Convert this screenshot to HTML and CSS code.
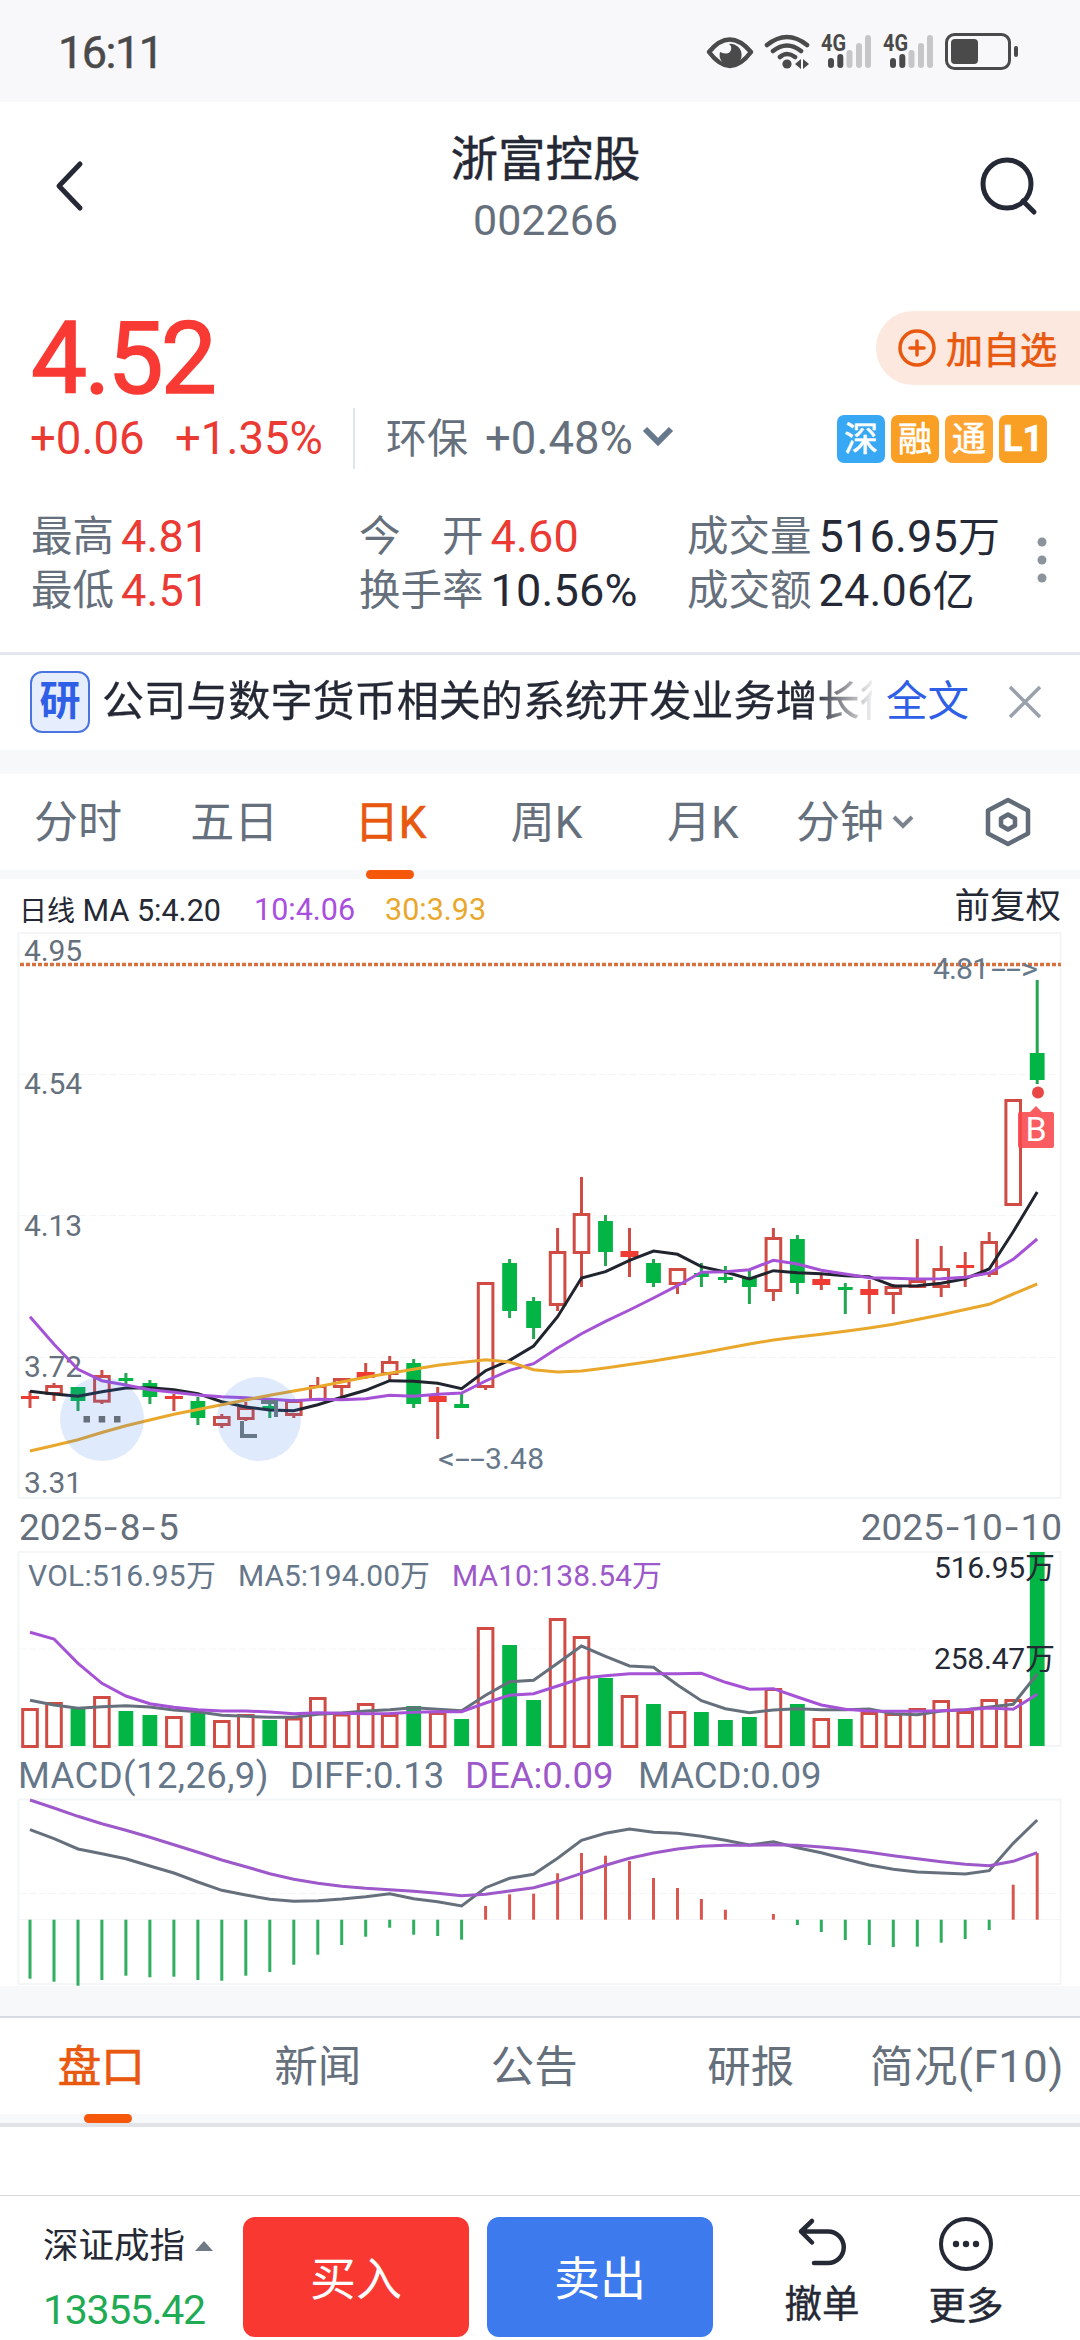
FILE: index.html
```html
<!DOCTYPE html>
<html lang="zh-CN">
<head>
<meta charset="utf-8">
<title>浙富控股 002266</title>
<link rel="stylesheet" href="styles.css">
</head>
<body>
<div class="status">
  <span class="clock">16:11</span>
  <svg class="status-icons" viewBox="700 26 330 50" width="330" height="50">
    <path d="M709 51q20.500-25 42 0q-21 28-42 0Z" fill="none" stroke="#4a4a4a" stroke-width="4.500" stroke-linejoin="round"/>
    <path d="M729 43a11 11 0 1 1-9 8q9 4 11-2q1-4-2-6Z" fill="#4a4a4a"/>
    <g fill="none" stroke="#4a4a4a" stroke-width="4.600" stroke-linecap="round">
      <path d="M767 44q20-16 40 0M773 50q14-11 28 0M780 56q7-6 15 0"/>
    </g>
    <circle cx="787" cy="63" r="4.600" fill="#4a4a4a"/>
    <path d="M795 63l6-5v10ZM809 63l-6-5v10Z" fill="#4a4a4a"/>
    <g>
      <text class="net" x="821" y="50" textLength="25" lengthAdjust="spacingAndGlyphs">4G</text>
      <g stroke-width="6" stroke-linecap="round"><path d="M831 60v4M840.300 56v8" stroke="#4a4a4a"/><path d="M849.500 52v12M859 45v19M868 37v27" stroke="#c6c6c8"/></g>
    </g>
    <g transform="translate(62 0)">
      <text class="net" x="821" y="50" textLength="25" lengthAdjust="spacingAndGlyphs">4G</text>
      <g stroke-width="6" stroke-linecap="round"><path d="M831 60v4M840.300 56v8" stroke="#4a4a4a"/><path d="M849.500 52v12M859 45v19M868 37v27" stroke="#c6c6c8"/></g>
    </g>
    <rect x="946.500" y="33.500" width="63" height="34" rx="8" fill="none" stroke="#4a4a4a" stroke-width="3"/>
    <rect x="951" y="38" width="27" height="25" rx="4" fill="#4a4a4a"/>
    <rect x="1014" y="45" width="4" height="11" rx="2" fill="#4a4a4a"/>
  </svg>
</div>

<header class="header">
  <svg class="back" viewBox="0 0 30 52" width="30" height="52"><path d="M26 4L5 26L26 48" fill="none" stroke="#252935" stroke-width="5" stroke-linecap="round" stroke-linejoin="round"/></svg>
  <div class="title"><h1>浙富控股</h1><p>002266</p></div>
  <svg class="search" viewBox="0 0 60 60" width="60" height="60"><circle cx="28" cy="28" r="24" fill="none" stroke="#252935" stroke-width="5"/><path d="M44 45l11 11" stroke="#252935" stroke-width="5" stroke-linecap="round"/></svg>
</header>

<section class="quote">
  <div class="price-row">
    <span class="price">4.52</span>
    <span class="add"><svg viewBox="0 0 40 40" width="40" height="40"><g fill="none" stroke="#e8590f" stroke-width="3.500" stroke-linecap="round"><circle cx="20" cy="20" r="17"/><path d="M13 20h14M20 13v14"/></g></svg>加自选</span>
  </div>
  <div class="change-row">
    <span class="red c1">+0.06</span><span class="red c2">+1.35%</span>
    <i class="divider"></i>
    <span class="sector">环保</span><span class="sector-pct">+0.48%</span>
    <svg class="chev" viewBox="0 0 32 24" width="32" height="24"><path d="M3 4L16 17L29 4" fill="none" stroke="#66788c" stroke-width="6"/></svg>
    <span class="badges"><b class="bl">深</b><b>融</b><b class="lt">通</b><b class="l1">L1</b></span>
  </div>
  <div class="stats">
    <div><label>最高</label><em class="red">4.81</em></div><div><label>今　开</label><em class="red">4.60</em></div><div><label>成交量</label><em>516.95<small>万</small></em></div>
    <div><label>最低</label><em class="red">4.51</em></div><div><label>换手率</label><em>10.56%</em></div><div><label>成交额</label><em>24.06<small>亿</small></em></div>
    <svg class="dots" viewBox="0 0 10 48" width="10" height="48"><g fill="#8b949c"><circle cx="5" cy="6" r="4.500"/><circle cx="5" cy="24" r="4.500"/><circle cx="5" cy="42" r="4.500"/></g></svg>
  </div>
</section>

<section class="notice">
  <span class="tag">研</span>
  <span class="news">公司与数字货币相关的系统开发业务增长很</span>
  <span class="full">全文</span>
  <svg viewBox="0 0 34 34" width="34" height="34"><path d="M2 2L32 32M32 2L2 32" stroke="#99a1ab" stroke-width="3.500"/></svg>
</section>

<nav class="periods">
  <span>分时</span><span>五日</span><span class="on">日K</span><span>周K</span><span>月K</span>
  <span class="minute">分钟<svg viewBox="0 0 22 16" width="22" height="16"><path d="M2 3l9 9l9-9" fill="none" stroke="#7c858e" stroke-width="4"/></svg></span>
  <svg class="gear" viewBox="0 0 46 50" width="46" height="50"><g fill="none" stroke="#626c79" stroke-width="4.500" stroke-linejoin="round"><path d="M23 3L43 13.500V36.500L23 47L3 36.500V13.500Z"/><path d="M23 17.500L30 21.500V28.500L23 32.500L16 28.500V21.500Z"/></g></svg>
</nav>

<section class="chart">
  <div class="legend">
    <span class="l-ma5"><span class="cn">日线</span> MA 5:4.20</span><span class="l-ma10">10:4.06</span><span class="l-ma30">30:3.93</span><span class="adj">前复权</span>
  </div>
  <svg id="kline" viewBox="0 932 1080 568" width="1080" height="568"></svg>
  <div class="dates"><span>2025<i>-</i>8<i>-</i>5</span><span>2025<i>-</i>10<i>-</i>10</span></div>
  <svg id="volume" viewBox="0 1550 1080 200" width="1080" height="200"></svg>
  <div class="macd-legend"><span class="m1">MACD(12,26,9)</span><span class="m2">DIFF:0.13</span><span class="m3">DEA:0.09</span><span class="m4">MACD:0.09</span></div>
  <svg id="macd" viewBox="0 1798 1080 188" width="1080" height="188"></svg>
</section>

<nav class="tabs"><span class="on">盘口</span><span>新闻</span><span>公告</span><span>研报</span><span class="f10">简况(F10)</span></nav>
<div class="blank"></div>

<footer class="bar">
  <div class="index"><p>深证成指<i></i></p><strong>13355.42</strong></div>
  <button class="buy">买入</button>
  <button class="sell">卖出</button>
  <div class="act undo"><svg viewBox="0 0 54 54" width="54" height="54"><path d="M17 4L6 14.500L17 25.500M6 14.500H33a15.700 15.700 0 0 1 0 31.500H19" fill="none" stroke="#252935" stroke-width="4.500" stroke-linecap="round" stroke-linejoin="round"/></svg><span>撤单</span></div>
  <div class="act more"><svg viewBox="0 0 56 56" width="56" height="56"><circle cx="28" cy="27" r="25" fill="none" stroke="#252935" stroke-width="4"/><g fill="#252935"><circle cx="18" cy="27" r="3.200"/><circle cx="28" cy="27" r="3.200"/><circle cx="38" cy="27" r="3.200"/></g></svg><span>更多</span></div>
</footer>
<script src="chart.js"></script>
</body>
</html>
```
FILE: styles.css
```css
* { box-sizing: border-box; }
body { margin: 0; width: 1080px; height: 2340px; overflow: hidden; background: #fff; color: #252935; font-family: Roboto, "Noto Sans CJK SC", sans-serif; display: flex; flex-direction: column; }
h1, p { margin: 0; font-weight: 400; }
i, em { font-style: normal; }
svg { display: block; flex: none; }
span, label { white-space: nowrap; }
.red { color: #ea3a33; }

.status { height: 102px; background: #f8f8fa; display: flex; align-items: center; justify-content: space-between; padding: 2px 50px 0 58px; flex: none; }
.clock { font-size: 45px; color: #4a4a4a; letter-spacing: -1.500px; -webkit-text-stroke: .5px; }
.net { font: 700 23px Roboto, sans-serif; fill: #4a4a4a; }

.header { height: 198px; flex: none; display: flex; justify-content: space-between; align-items: flex-start; padding: 0 41px 0 54px; }
.back { margin-top: 58px; }
.search { margin-top: 54px; }
.title { text-align: center; padding-top: 30px; margin-left: 28px; }
.title h1 { font-size: 47.500px; line-height: 56px; font-weight: 400; -webkit-text-stroke: .4px; }
.title p { font-size: 43px; line-height: 60px; margin-top: 2px; color: #66707d; }

.quote { height: 352px; flex: none; }
.price-row { height: 104px; display: flex; justify-content: space-between; align-items: flex-start; padding: 0 0 0 31px; }
.price { font-size: 100px; line-height: 117px; color: #f93a34; letter-spacing: -3px; -webkit-text-stroke: 1.500px; }
.add { margin-top: 11px; width: 204px; height: 74px; border-radius: 37px 0 0 37px; background: #fde8e0; color: #e8590f; display: flex; align-items: center; padding: 0 0 0 21px; gap: 9px; font-size: 37px; -webkit-text-stroke: .7px; }
.change-row { height: 69px; display: flex; align-items: center; font-size: 45.500px; padding-left: 30px; color: #66707d; line-height: 60px; }
.c1 { width: 145px; }
.c2 { width: 178px; }
.divider { width: 2px; height: 61px; background: #dfe5ea; margin-right: 31px; }
.sector { font-size: 41px; width: 99px; }
.sector-pct { width: 157px; }
.chev { margin-top: -4px; }
.badges { display: flex; gap: 6px; margin-left: auto; padding-right: 33px; }
.badges b { width: 48px; height: 48px; border-radius: 7px; background: #f99f24; color: #fff; font-size: 34px; font-weight: 400; line-height: 48px; text-align: center; -webkit-text-stroke: .6px; }
.badges .bl { background: #38a8f4; }
.badges .lt { background: #fda433; }
.badges .l1 { font-weight: 700; font-size: 36px; }
.stats { position: relative; display: grid; grid-template-columns: 328px 328px 1fr; grid-auto-rows: 54px; padding: 37px 0 0 31px; }
.stats div { display: flex; align-items: center; line-height: 54px; }
.stats label { font-size: 41.500px; color: #66707d; margin-right: 7px; }
.stats em { font-size: 45px; letter-spacing: .2px; }
.stats small { font-size: 42px; }
.dots { position: absolute; left: 1037px; top: 63px; }

.notice { height: 122px; border-top: 3px solid #e6e7ee; flex: none; display: flex; align-items: center; padding: 0 38px 26px 30px; box-shadow: inset 0 -24px #f7f8fa; }
.tag { width: 60px; height: 62px; border: 2px solid #4a74e0; border-radius: 12px; background: #e6edfd; color: #2f5fe6; font-size: 41px; font-weight: 700; line-height: 56px; text-align: center; }
.news { width: 770px; margin-left: 12px; overflow: hidden; font-size: 42.100px; -webkit-text-stroke: .3px; line-height: 60px; -webkit-mask-image: linear-gradient(90deg, #000 710px, transparent 775px); mask-image: linear-gradient(90deg, #000 710px, transparent 775px); }
.full { color: #2f5fe6; font-size: 41.500px; line-height: 60px; margin: 0 auto 0 14px; }

.periods { height: 105px; flex: none; display: flex; font-size: 44px; color: #66707d; box-shadow: inset 0 -9px #f7f8fa; line-height: 98px; }
.periods > span { width: 156.200px; text-align: center; position: relative; }
.on { color: #e8590f; -webkit-text-stroke: .7px; }
.on::after { content: ""; position: absolute; bottom: 0; left: 54px; width: 48px; height: 9px; border-radius: 5px; background: #f5570b; }
.periods .minute { display: flex; align-items: center; gap: 9px; width: auto; height: 98px; padding-left: 15px; }
.minute svg { margin-top: -2px; margin-left: -1px; }
.gear { margin: 23px 49px 0 auto; }

.legend { height: 53px; display: flex; align-items: center; font-size: 30.500px; padding: 7px 19px 0 19px; }
.cn { font-size: 28px; }
.l-ma5 { width: 235px; }
.l-ma10 { width: 131px; color: #a94fdd; }
.l-ma30 { color: #e9a72c; }
.adj { margin-left: auto; font-size: 35.500px; margin-top: -13px; }
.dates { height: 50px; display: flex; justify-content: space-between; padding: 4px 18px 0 19px; font-size: 37px; line-height: 48px; color: #66707d; }
.dates i { display: inline-block; width: 17.500px; text-align: center; transform: scaleX(1.300); }
.macd-legend { height: 48px; display: flex; font-size: 36.500px; line-height: 52px; color: #66778a; padding-left: 18px; }
.m1 { width: 272px; letter-spacing: .4px; }
.m2 { width: 175px; }
.m3 { width: 173px; color: #9d58ca; }
#kline text, #volume text { font-family: Roboto, "Noto Sans CJK SC", sans-serif; font-size: 30px; }

.tabs { height: 141px; flex: none; display: flex; border-top: 30px solid #f7f8fa; font-size: 43.500px; color: #66707d; line-height: 104px; box-shadow: inset 0 2px #d5dbe1, inset 0 -4px #e2e3e7, inset 0 -13px #f7f8fa; }
.tabs span { width: 216.500px; padding-right: 14px; text-align: center; position: relative; }
.tabs .on::after { left: 84px; bottom: 4px; }
.tabs .f10 { padding: 0; width: 208px; margin-left: -3px; letter-spacing: .6px; }
.blank { height: 68px; flex: none; }
.bar { height: 145px; flex: none; border-top: 1px solid #d5d7db; display: flex; padding-top: 21px; }
.index { width: 243px; padding-left: 43px; }
.index p { font-size: 35.500px; line-height: 58px; display: flex; align-items: center; gap: 10px; }
.index i { border: 9px solid transparent; border-top: 0; border-bottom: 10px solid #707986; }
.index strong { display: block; font-weight: 400; font-size: 41px; line-height: 50px; margin-top: 10px; color: #1fab54; letter-spacing: -1.300px; }
button { width: 226px; height: 120px; border: 0; border-radius: 12px; color: #fff; font: 46px Roboto, "Noto Sans CJK SC", sans-serif; padding: 0 0 5px; }
.buy { background: #f93832; margin-right: 18px; }
.sell { background: #3c7aee; }
.act { width: 144px; display: flex; flex-direction: column; align-items: center; font-size: 37.500px; line-height: 48px; -webkit-text-stroke: .4px; }
.undo { margin-left: 37px; }
.undo span { margin-top: 9px; }
.more span { margin-top: 9px; }
```
FILE: chart.js
```js
// Candles: [kind, high, top, bottom, low]; r = hollow up, f = filled up, g = down
const candles = [
  ['f',1391,1396,1399,1408],['r',1383,1385,1395,1401],['g',1387,1387,1401,1411],['r',1370,1375,1402.7,1404],
  ['g',1373,1378,1381,1386],['g',1380,1383,1397,1404],['f',1394,1396,1399,1411],['g',1397,1401,1418,1425],
  ['r',1414,1416,1426,1428],['r',1402,1407,1420,1421],['g',1400,1406,1410,1418],['r',1399,1400,1416,1418],
  ['r',1377,1385,1401,1401],['r',1378,1378,1388,1397],['f',1363,1372,1378,1379],['r',1356,1361,1375,1381],
  ['g',1359,1363,1404,1408],['f',1387,1396,1402,1439],['g',1393,1404,1408,1408],['r',1282,1282,1388,1390],
  ['g',1259,1263,1311,1318],['g',1297,1301,1328,1339],['r',1228,1251,1306,1311],['r',1177,1213,1254,1287],
  ['g',1215,1221,1252,1266],['f',1228,1251,1257,1277],['g',1259,1263,1283,1287],['r',1268,1268,1285,1294],
  ['g',1263,1273,1277,1287],['g',1266,1277,1280,1283],['g',1270,1277,1287,1304],['r',1228,1237,1292,1301],
  ['g',1235,1239,1283,1294],['f',1275,1279,1285,1290],['g',1283,1287,1290,1314],['f',1280,1289,1295,1314],
  ['r',1284,1286,1295,1314],['r',1239,1280,1288,1288],['r',1246,1268,1288,1297],['f',1252,1265,1268,1287],
  ['r',1232,1241,1275,1277],['r',1099,1099,1206,1206],['g',980,1053,1080,1084]];
const ma5 = [1391.3,1394,1396.3,1391.7,1388,1387.7,1389.7,1393.7,1401.7,1407,1410,1410.7,1404.7,1397.3,1390.3,1380.7,1381.3,1383.3,1388.7,1370.7,1360.3,1346,1316.7,1278,1271.7,1260.3,1251,1254.3,1266.7,1272,1279,1270.7,1272.7,1273.7,1275.7,1276.7,1286,1285.7,1283.3,1278.7,1269,1231.7,1192];
const ma10 = [1316.7,1344.3,1369.3,1380.7,1385,1389.7,1392.3,1395,1396.7,1397.7,1399.3,1400.7,1399.3,1399.7,1398.7,1395.3,1396.3,1394.3,1393,1381,1370.3,1363.7,1348,1333.7,1321.3,1310,1298,1285.7,1272.3,1271.7,1269.7,1260.3,1264,1270.3,1274,1277.7,1278.3,1279,1278.7,1277.3,1273,1259.3,1239];
const ma30 = [1451,1445.5,1439.7,1432.5,1425.7,1420,1414.3,1409.5,1404.7,1400,1395.3,1391,1386.7,1382,1377.3,1373.3,1369.3,1365.3,1362.5,1359.7,1362,1369.7,1372,1371,1368,1364.5,1361,1357,1353,1348.5,1344,1340,1337,1334.3,1331.3,1328,1324.3,1319.5,1314.7,1309.5,1304.3,1294,1284];
const volKinds = 'rrgrggrgrrgrrrrrgrgrggrrgrgrgggrgrgrrrrrrrg';
const vols = [1708,1702,1708.7,1696,1711,1715,1716,1713,1720,1714,1720,1717.5,1697,1713.5,1703,1714,1706,1712,1719,1627,1645,1700,1618,1636,1678,1695,1704,1711,1712,1720,1717,1688,1704,1718,1719,1712,1713,1708,1700,1711,1699,1699,1552];
const vma5 = [1700.3,1705,1708.3,1706.7,1705.7,1707,1710,1711.7,1715.3,1716.3,1717.3,1717.3,1714.3,1713,1711,1709.7,1707.7,1709.3,1710.7,1695.3,1681.7,1680.3,1663.3,1646,1656.3,1666,1667.3,1685,1700.7,1708.7,1712.7,1710,1708.7,1709.7,1709.7,1709,1713.7,1714.7,1711,1709.7,1707,1704.3,1674];
const vma10 = [1632.3,1639,1663.3,1683.3,1696,1703.7,1707.3,1709.7,1711,1711,1712,1713.7,1712.7,1713.3,1713.7,1713.5,1712.3,1711.7,1711.7,1703,1695.3,1693.7,1686,1678.3,1675.7,1673.7,1673.7,1673.7,1673.3,1682.3,1689.3,1688.7,1697,1705,1709.3,1711,1711.3,1711.3,1710.7,1709.7,1708,1709.3,1694.3];
const hist = [1978.7,1981.7,1985.7,1980,1975.7,1977.3,1976.7,1980,1980.7,1975.7,1972,1964.7,1954.7,1945,1936.7,1927.7,1934.7,1936,1939.7,1906,1894.3,1893.7,1873.3,1853,1855.7,1861,1878,1888,1899,1909.7,1919.7,1914,1925,1932,1940,1945,1947,1946.7,1942.7,1939,1930,1884.7,1853];
const diff = [1829.7,1838.7,1849,1853.7,1858.7,1866,1873,1882,1890.3,1895,1899.3,1901.3,1900.7,1899,1896.7,1893.7,1898.7,1901.7,1906,1887.7,1878.3,1874.3,1858.3,1840.3,1833.3,1829,1832.3,1833.3,1836.3,1840.3,1845,1841.7,1847.7,1852.7,1859,1865,1869.3,1872,1873,1874,1870.7,1843.3,1820];
const dea = [1800,1808,1816.3,1823.7,1830.3,1837.3,1844.7,1852.3,1860,1866.7,1873.7,1879.3,1883.3,1886.3,1888.3,1889.7,1891.3,1893.3,1895.7,1894.3,1891,1887.7,1881.3,1873.3,1865.3,1858.3,1853,1849,1846.3,1845.3,1845.3,1844.7,1845.3,1847,1849.3,1852.3,1855.7,1858.7,1861.7,1864.3,1865.7,1861.3,1852.7];

const RED = '#cf4b43', GREEN = '#03b544', GRAY = '#66707d', PURPLE = '#a552d6';
const x = i => +(30 + 23.98 * i).toFixed(1);
const rect = (l, t, w, h, fill) => `<rect x="${l}" y="${t}" width="${w}" height="${h}" fill="${fill}"/>`;
const line = (ys, color) => `<polyline points="${ys.map((y, i) => x(i) + ',' + y).join(' ')}" fill="none" stroke="${color}" stroke-width="3"/>`;
const hollow = (i, t, b) => `<rect x="${x(i) - 7.3}" y="${t + 1.5}" width="14.6" height="${Math.max(b - t - 3, 1)}" fill="#fff" stroke="${RED}" stroke-width="3"/>`;
const text = (l, y, s, fill, len, adjust = 'spacing') => `<text x="${l}" y="${y}" fill="${fill}"${len ? ` textLength="${len}" lengthAdjust="${adjust}"` : ''}>${s}</text>`;
const frame = (t, b, dashes) => `<rect x="18.500" y="${t}" width="1042" height="${b - t}" fill="none" stroke="#f4f5f7" stroke-width="2"/>` +
  dashes.map(y => `<path d="M19 ${y}H1060" stroke="#f4f5f7" stroke-dasharray="7 3"/>`).join('');

let k = frame(933, 1498, [1074.5, 1215.5, 1357.5]);
[[4.95, 961], [4.54, 1094], [4.13, 1236], [3.72, 1377], [3.31, 1493]].forEach(([p, y]) => { k += text(24, y, p, GRAY, 58); });
candles.forEach(([c, hi, t, b, lo], i) => {
  const col = c === 'g' ? '#22a650' : RED;
  k += rect(x(i) - 1.5, hi, 3, lo - hi, col);
  if (c === 'r') k += hollow(i, t, b);
  else if (c === 'f') k += rect(x(i) - 9, t, 18, b - t, '#ee3b33');
  else k += rect(x(i) - 7.4, t, 14.8, b - t, GREEN);
});
k += line(ma5, '#20242e') + line(ma10, PURPLE) + line(ma30, '#e9a72c');
k += '<g fill="#3b7aee" fill-opacity=".16"><circle cx="102" cy="1419" r="42"/><circle cx="259" cy="1419" r="42"/></g>';
k += [83.5, 98.7, 114].map(l => rect(l, 1416, 6.5, 6.5, '#66707d')).join('');
k += '<path d="M242 1421V1436H257M261 1402H276V1417" fill="none" stroke="#66788a" stroke-width="4"/>';
k += '<path d="M20 964.500H1061" stroke="#d8703f" stroke-width="3.500" stroke-dasharray="4 2"/>';
k += text(933, 979, '4.81', '#66788a', 56) + text(991, 979, '--', '#66788a', 30, 'spacingAndGlyphs') + text(1021, 979, '&gt;', '#66788a', 17, 'spacingAndGlyphs');
k += text(438, 1469, '&lt;', '#66788a', 17, 'spacingAndGlyphs') + text(455, 1469, '--', '#66788a', 30, 'spacingAndGlyphs') + text(485, 1469, '3.48', '#66788a', 59);
k += '<circle cx="1038" cy="1092.500" r="6" fill="#e94646"/><path d="M1020 1112h10l6-6l6 6h10a2 2 0 0 1 2 2v32a2 2 0 0 1-2 2h-32a2 2 0 0 1-2-2v-32a2 2 0 0 1 2-2Z" fill="#f8474b" fill-opacity=".88"/>';
k += '<text x="1036" y="1141" fill="#fff" text-anchor="middle" style="font-size:34px">B</text>';
document.getElementById('kline').innerHTML = k;

let v = frame(1552, 1746, [1649]);
vols.forEach((t, i) => { v += volKinds[i] === 'r' ? hollow(i, t, 1748) : rect(x(i) - 7.4, t, 14.8, 1746 - t, GREEN); });
v += line(vma5, GRAY) + line(vma10, PURPLE);
v += text(28, 1586, 'VOL:516.95万', '#66778a', 188) + text(238, 1586, 'MA5:194.00万', '#66778a', 192) + text(452, 1586, 'MA10:138.54万', '#9d58ca', 210);
v += text(934, 1578, '516.95万', '#252935', 121) + text(934, 1669, '258.47万', '#252935', 121);
document.getElementById('volume').innerHTML = v;

let m = frame(1799.5, 1984, [1893.5]) + '<path d="M19 1919.500H1060" stroke="#f4f5f7"/>';
hist.forEach((y, i) => { m += rect(x(i) - 1.5, Math.min(y, 1919.7), 3, Math.abs(y - 1919.7), y > 1919.7 ? '#2fae5e' : '#d9564e'); });
m += line(diff, GRAY) + line(dea, '#9d58ca');
document.getElementById('macd').innerHTML = m;
```
